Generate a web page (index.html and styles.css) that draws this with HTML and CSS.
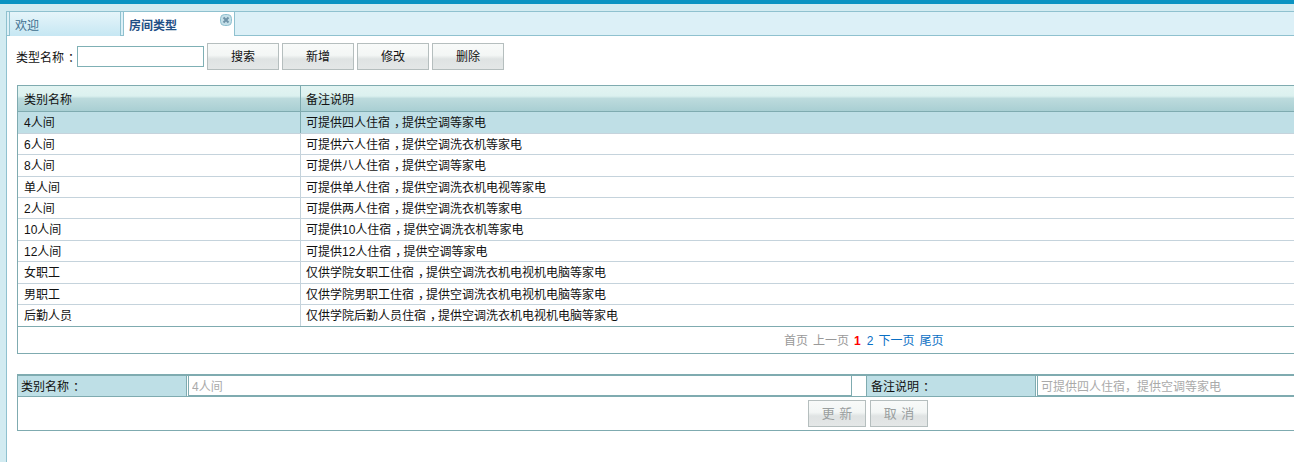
FILE: index.html
```html
<!DOCTYPE html>
<html>
<head>
    <meta charset="utf-8">
    <title>房间类型</title>
    <link rel="stylesheet" href="styles.css">
</head>
<body>
    <div class="topbar"></div>
    <div class="shell">
        <div class="panel">
            <!-- tabs -->
            <div class="tabs">
                <div class="tab">欢迎</div>
                <div class="tab tab-on">房间类型
                    <svg class="tab-close" width="12" height="12" viewBox="0 0 12 12">
                        <rect x="0.5" y="0.5" width="11" height="11" rx="4" fill="#c4dfe8" stroke="#8fc0d0"/>
                        <path d="M3.5 3.5L8.5 8.5M8.5 3.5L3.5 8.5" stroke="#6f93a8" stroke-width="2"/>
                    </svg>
                </div>
            </div>

            <!-- search -->
            <div class="toolbar">
                <label class="search-label">类型名称<span class="punct">：</span></label>
                <input type="text" class="search-input">
                <button class="btn">搜索</button>
                <button class="btn">新增</button>
                <button class="btn">修改</button>
                <button class="btn">删除</button>
            </div>

            <!-- list -->
            <div class="grid">
                <div class="row row-head">
                    <div class="cell cell-name">类别名称</div>
                    <div class="cell">备注说明</div>
                </div>
                <div class="row row-on"><div class="cell cell-name">4人间</div><div class="cell">可提供四人住宿<span class="punct">，</span>提供空调等家电</div></div>
                <div class="row"><div class="cell cell-name">6人间</div><div class="cell">可提供六人住宿<span class="punct">，</span>提供空调洗衣机等家电</div></div>
                <div class="row"><div class="cell cell-name">8人间</div><div class="cell">可提供八人住宿<span class="punct">，</span>提供空调等家电</div></div>
                <div class="row"><div class="cell cell-name">单人间</div><div class="cell">可提供单人住宿<span class="punct">，</span>提供空调洗衣机电视等家电</div></div>
                <div class="row"><div class="cell cell-name">2人间</div><div class="cell">可提供两人住宿<span class="punct">，</span>提供空调洗衣机等家电</div></div>
                <div class="row"><div class="cell cell-name">10人间</div><div class="cell">可提供10人住宿<span class="punct">，</span>提供空调洗衣机等家电</div></div>
                <div class="row"><div class="cell cell-name">12人间</div><div class="cell">可提供12人住宿<span class="punct">，</span>提供空调等家电</div></div>
                <div class="row"><div class="cell cell-name">女职工</div><div class="cell">仅供学院女职工住宿<span class="punct">，</span>提供空调洗衣机电视机电脑等家电</div></div>
                <div class="row"><div class="cell cell-name">男职工</div><div class="cell">仅供学院男职工住宿<span class="punct">，</span>提供空调洗衣机电视机电脑等家电</div></div>
                <div class="row row-last"><div class="cell cell-name">后勤人员</div><div class="cell">仅供学院后勤人员住宿<span class="punct">，</span>提供空调洗衣机电视机电脑等家电</div></div>
                <div class="pager">
                    <span class="pg-off">首页</span>
                    <span class="pg-off">上一页</span>
                    <span class="pg-now">1</span>
                    <a class="pg-link">2</a>
                    <a class="pg-link">下一页</a>
                    <a class="pg-link">尾页</a>
                </div>
            </div>

            <!-- edit form -->
            <div class="editor">
                <div class="editor-row">
                    <div class="editor-label">类别名称<span class="punct">：</span></div>
                    <input type="text" class="editor-input editor-input-a" value="4人间" disabled>
                    <div class="editor-gap"></div>
                    <div class="editor-label editor-label-b">备注说明<span class="punct">：</span></div>
                    <input type="text" class="editor-input editor-input-b" value="可提供四人住宿，提供空调等家电" disabled>
                </div>
                <div class="editor-btns">
                    <button class="btn btn-small" disabled>更 新</button>
                    <button class="btn btn-small" disabled>取 消</button>
                </div>
            </div>
        </div>
    </div>
</body>
</html>
```

FILE: styles.css
```css
html, body { margin: 0; height: 100%; overflow: hidden; }
body { font-family: "Liberation Sans", "Noto Sans CJK SC", sans-serif; font-size: 12px; color: #111; background-color: #d2ebf1; }

.topbar { height: 4px; background-color: #0a93c2; }
.shell { padding: 7px 0 0 6px; height: 451px; }
.panel { height: 100%; width: 1400px; background-color: #fff; border-left: 1px solid #8fc1cf; border-top: 1px solid #8fc1cf; }

/* the screenshot's font centres its full width punctuation in the em box */
.punct { padding-left: 4px; letter-spacing: -4px; }

.tabs { display: flex; height: 23px; padding-left: 2px; gap: 2px; background-color: #dcf0f7; border-bottom: 1px solid #8fc1cf; }
.tab { position: relative; box-sizing: border-box; width: 112px; height: 24px; padding: 5px 0 0 5px; line-height: 18px; color: #3f6f8f; border-left: 1px solid #8fc1cf; border-right: 1px solid #8fc1cf; background: linear-gradient(#e6f5fa, #c6e7f3); }
.tab-on { color: #1f4f85; font-weight: bold; background: #fff; }
.tab-close { position: absolute; right: 2px; top: 2px; }

.toolbar { display: flex; align-items: center; height: 27px; margin-top: 7px; padding-left: 9px; }
.search-label { width: 61px; }
.search-input { box-sizing: border-box; width: 127px; height: 21px; margin: 0; padding: 0 3px; border: 1px solid #7fb0b5; background: #fff; }
.btn { box-sizing: border-box; width: 72px; height: 27px; margin: 0 0 0 3px; padding: 0 0 2px; font: inherit; color: #111; border: 1px solid #b5bebe; background: linear-gradient(#f8faf9 0%, #f3f6f5 45%, #dfe3e3 60%, #e4e7e7 100%); }
.btn-small { width: 58px; margin-left: 4px; font-size: 13px; word-spacing: 1px; color: #9a9f9f; }

.grid { width: 1400px; margin: 15px 0 0 10px; border: 1px solid #7fabb0; }
.row { display: flex; box-sizing: border-box; height: 21.45px; line-height: 21px; border-bottom: 1px solid #c5d3dc; }
.row-head { height: 26.2px; line-height: 25px; border-bottom: 1px solid #7fabb0; background: linear-gradient(#e2f4f2 0%, #dcf1ef 40%, #bddbdd 50%, #a9cfd3 100%); }
.row-on { background-color: #bfdfe6; }
.row-last { border-bottom: 1px solid #7fabb0; }
.cell { box-sizing: border-box; padding: 1px 0 0 5px; white-space: nowrap; }
.row-head .cell { padding-top: 2px; }
.cell-name { width: 283px; flex: none; padding-left: 6px; border-right: 1px solid #c5d3dc; }
.row-head .cell-name, .row-on .cell-name { border-right-color: #7fabb0; }

.pager { display: flex; gap: 5px; height: 26.3px; line-height: 29px; padding-left: 766px; }
.pg-off { color: #999; }
.pg-now { color: #f00; font-weight: bold; margin-right: 1px; }
.pg-link { color: #0a6fc4; }

.editor { width: 1400px; margin: 20px 0 0 10px; border-left: 1px solid #7fabb0; border-top: 2px solid #7fabb0; border-bottom: 1px solid #7fabb0; }
.editor-row { display: flex; height: 20px; border-bottom: 1px solid #7fabb0; }
.editor-label { box-sizing: border-box; width: 169px; flex: none; padding-left: 3px; line-height: 22px; background-color: #bedfe6; border-right: 1px solid #7fabb0; }
.editor-label-b { width: 170px; padding-left: 4px; border-left: 1px solid #7fabb0; }
.editor-input { box-sizing: border-box; height: 20px; margin: 0 0 0 1px; padding: 1px 0 0 3px; font: inherit; color: #aaa; background: #fff; border: 0; border-left: 1px solid #7fabb0; border-bottom: 1px solid #7fabb0; }
.editor-input-a { width: 664px; flex: none; border-right: 1px solid #7fabb0; }
.editor-input-b { width: 400px; flex: none; }
.editor-gap { width: 14px; flex: none; }
.editor-btns { display: flex; box-sizing: border-box; height: 33px; padding: 3px 0 0 786px; }
```
